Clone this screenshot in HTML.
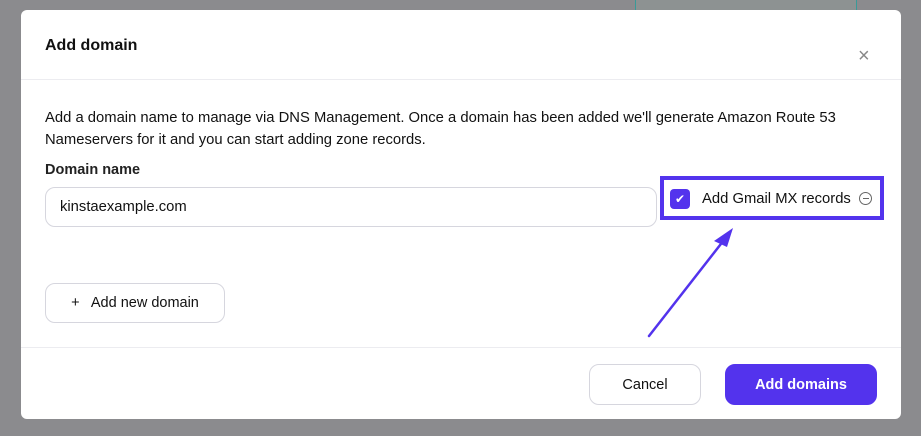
<!DOCTYPE html>
<html><head><style>
body{margin:0;width:921px;height:436px;background:#8b8b8e;font-family:"Liberation Sans",sans-serif;position:relative;overflow:hidden;color:#111}
.m{position:absolute;left:21px;top:10px;width:880px;height:409px;background:#fff;border-radius:6px}
.a{position:absolute}
.btn{position:absolute;border:1px solid #d6d6de;border-radius:10px;background:#fff;font-size:14.5px;display:flex;align-items:center;justify-content:center;box-sizing:border-box}
</style></head><body>
<div class="a" style="left:635px;top:0;width:220px;height:10px;border-left:1px solid #3a9a98;border-right:1px solid #3a9a98;background:#8d9292"></div>
<div class="m">
<div class="a" style="left:24px;top:27px;font-size:16px;font-weight:bold">Add domain</div>
<div class="a" style="left:837px;top:35px;font-size:20px;color:#888;font-weight:300">×</div>
<div class="a" style="left:0;top:69px;width:880px;height:1px;background:#ececf0"></div>
<div class="a" style="left:24px;top:97px;width:830px;font-size:14.8px;line-height:22px">Add a domain name to manage via DNS Management. Once a domain has been added we'll generate Amazon Route 53 Nameservers for it and you can start adding zone records.</div>
<div class="a" style="left:24px;top:152px;font-size:14.5px;font-weight:bold;color:#222">Domain name</div>
<div class="a" style="left:24px;top:177px;width:612px;height:40px;border:1px solid #d6d6de;border-radius:10px;box-sizing:border-box;padding-left:14px;line-height:38px;font-size:14.8px">kinstaexample.com</div>
<div class="a" style="left:639px;top:166px;width:224px;height:44px;border:4px solid #5333ed;box-sizing:border-box"></div>
<div class="a" style="left:649px;top:179px;width:20px;height:20px;background:#5333ed;border-radius:4px;color:#fff;font-size:12px;text-align:center;line-height:20px">✔</div>
<div class="a" style="left:681px;top:181px;font-size:14.8px">Add Gmail MX records</div>
<div class="a" style="left:838px;top:182px;width:11px;height:11px;border:1.5px solid #666;border-radius:50%"><div class="a" style="left:2.5px;top:4.7px;width:6px;height:1.5px;background:#666"></div></div>
<div class="btn" style="left:24px;top:273px;width:180px;height:40px">+&nbsp;&nbsp; Add new domain</div>
<div class="a" style="left:0;top:337px;width:880px;height:1px;background:#ececf0"></div>
<div class="btn" style="left:568px;top:354px;width:112px;height:41px">Cancel</div>
<div class="btn" style="left:704px;top:354px;width:152px;height:41px;background:#5333ed;border-color:#5333ed;color:#fff;font-weight:bold">Add domains</div>
</div>
<svg class="a" style="left:0;top:0" width="921" height="436"><line x1="649" y1="336" x2="724" y2="240" stroke="#5333ed" stroke-width="2.5" stroke-linecap="round"/><polygon points="733,228 714,241 727,247" fill="#5333ed"/></svg>
</body></html>
